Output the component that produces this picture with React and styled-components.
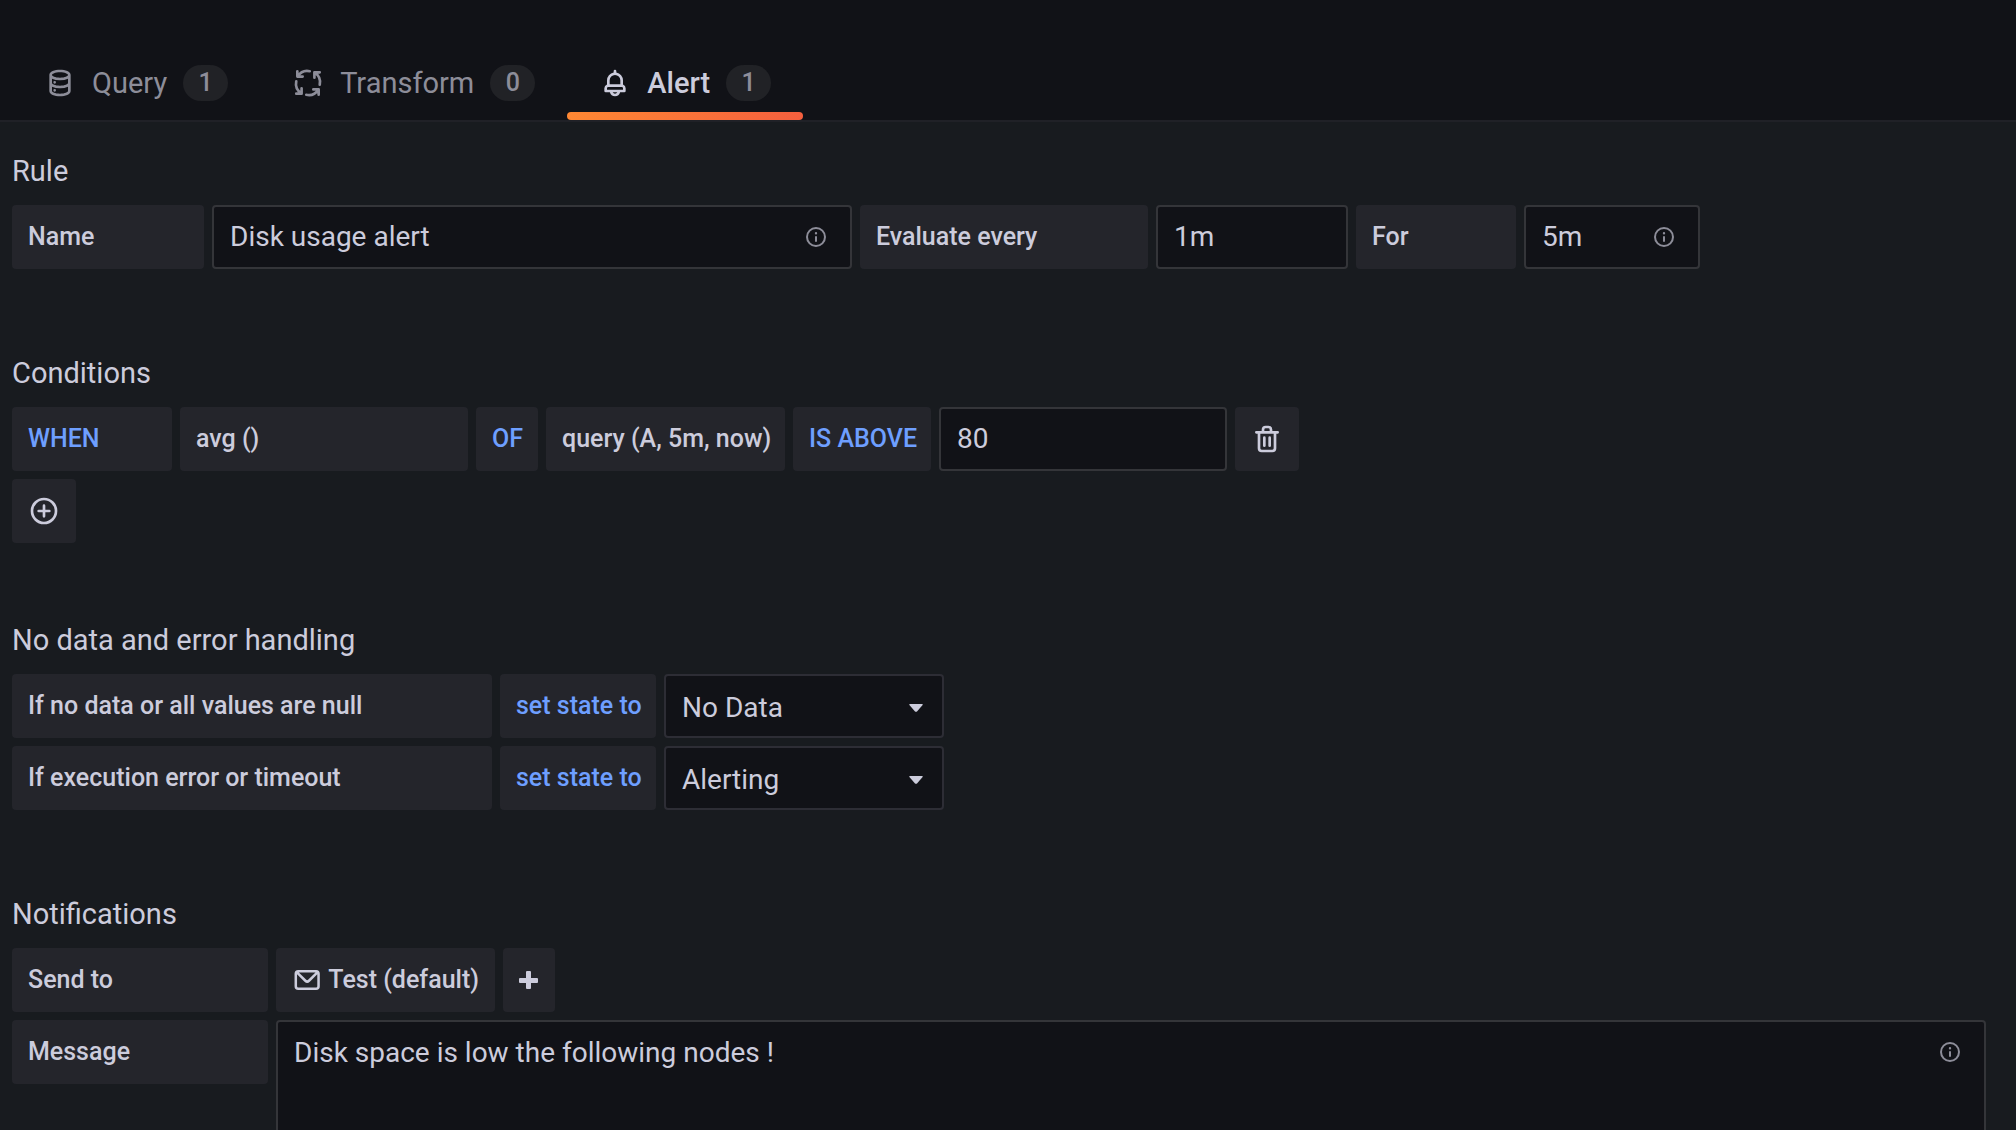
import React from "react";
import styled, { createGlobalStyle, css } from "styled-components";

const color = {
  canvas: "#111217",
  panel: "#181b1f",
  block: "#24252b",
  border: "#343539",
  selectBorder: "#2d2d35",
  divider: "#202127",
  badge: "#212226",
  text: "#ccccdc",
  muted: "#8d8d99",
  link: "#6e9fff",
};

const GlobalStyle = createGlobalStyle`
  *, *::before, *::after { box-sizing: border-box; }
  body {
    margin: 0;
    background: ${color.panel};
    color: ${color.text};
    font-family: Roboto, "Liberation Sans", sans-serif;
    font-size: 28px;
    line-height: 42px;
  }
  button, input, select, textarea { font: inherit; color: inherit; margin: 0; }
`;

const Page = styled.div`
  display: flex;
  flex-direction: column;
  height: 100vh;
`;

const TabBar = styled.header`
  flex: none;
  padding: 46px 12px 0;
  background: ${color.canvas};
  border-bottom: 2px solid ${color.divider};
`;

const TabList = styled.div`
  display: flex;
`;

const Tab = styled.button`
  position: relative;
  display: flex;
  align-items: center;
  gap: 16px;
  height: 74px;
  padding: 0 32px;
  border: 0;
  background: none;
  color: ${(p) => (p.$active ? color.text : color.muted)};
  font-size: 29px;
  font-weight: ${(p) => (p.$active ? 500 : 400)};
  cursor: pointer;

  ${(p) =>
    p.$active &&
    css`
      &::after {
        content: "";
        position: absolute;
        left: 0;
        right: 0;
        bottom: 0;
        height: 8px;
        border-radius: 4px;
        background: linear-gradient(90deg, #ff8833, #f55f3e);
      }
    `}
`;

const Counter = styled.span`
  min-width: 45px;
  border-radius: 18px;
  background: ${color.badge};
  color: ${color.muted};
  font-size: 25px;
  font-weight: 500;
  line-height: 36px;
  text-align: center;
`;

const Content = styled.main`
  flex: 1;
  min-height: 0;
  overflow-y: auto;
  scrollbar-width: none;
  padding: 28px 30px 32px 12px;
`;

const Section = styled.section`
  margin-bottom: ${(p) => (p.$tight ? 76 : 83)}px;
`;

const Heading = styled.h2`
  margin: 0 0 13px;
  font-size: 29px;
  font-weight: 400;
  line-height: 42px;
`;

const Rows = styled.div`
  display: flex;
  flex-direction: column;
  gap: 8px;
`;

const Row = styled.div`
  display: flex;
  align-items: flex-start;
  gap: 8px;
`;

const block = css`
  display: flex;
  align-items: center;
  flex: none;
  height: 64px;
  width: ${(p) => (p.$width ? `${p.$width}px` : "auto")};
  padding: 0 16px;
  border: 0;
  border-radius: 4px;
  background: ${color.block};
  color: ${(p) => (p.$keyword ? color.link : color.text)};
  font-size: 25px;
  font-weight: 500;
  line-height: 36px;
  white-space: nowrap;
`;

const Label = styled.label`
  ${block}
`;

const Tag = styled.span`
  ${block}
`;

const Segment = styled.button`
  ${block}
  gap: 6px;
  text-align: left;
  cursor: pointer;
`;

const IconButton = styled.button`
  ${block}
  justify-content: center;
  padding: 0;
  cursor: pointer;
`;

const Field = styled.div`
  position: relative;
  flex: ${(p) => (p.$width ? "none" : "1")};
  width: ${(p) => (p.$width ? `${p.$width}px` : "auto")};
`;

const control = css`
  display: block;
  width: 100%;
  border: 2px solid ${color.border};
  border-radius: 4px;
  background: ${color.canvas};
  outline: none;
`;

const Input = styled.input`
  ${control}
  height: 64px;
  padding: 0 16px 2px;
`;

const Select = styled.select`
  ${control}
  height: 64px;
  padding: 4px 48px 0 16px;
  border-color: ${color.selectBorder};
  appearance: none;
  cursor: pointer;
`;

const TextArea = styled.textarea`
  ${control}
  padding: 10px 64px 10px 16px;
  resize: none;
`;

const Hint = styled.span`
  position: absolute;
  top: 20px;
  right: 24px;
  display: flex;
  color: ${color.muted};
`;

const Caret = styled.svg`
  position: absolute;
  top: 30px;
  right: 21px;
  pointer-events: none;
`;

const icons = {
  database:
    "M8,16.5a1,1,0,1,0,1,1A1,1,0,0,0,8,16.5ZM12,2C8,2,4,3.37,4,6V18c0,2.63,4,4,8,4s8-1.37,8-4V6C20,3.37,16,2,12,2Zm6,16c0,.71-2.28,2-6,2s-6-1.29-6-2V14.73A13.16,13.16,0,0,0,12,16a13.16,13.16,0,0,0,6-1.27Zm0-6c0,.71-2.28,2-6,2s-6-1.29-6-2V8.73A13.16,13.16,0,0,0,12,10a13.16,13.16,0,0,0,6-1.27ZM12,8C8.28,8,6,6.71,6,6s2.28-2,6-2,6,1.29,6,2S15.72,8,12,8ZM8,10.5a1,1,0,1,0,1,1A1,1,0,0,0,8,10.5Z",
  bell: "M18,13.18V10a6,6,0,0,0-5-5.91V3a1,1,0,0,0-2,0V4.09A6,6,0,0,0,6,10v3.18A3,3,0,0,0,4,16v2a1,1,0,0,0,1,1H8.14a4,4,0,0,0,7.72,0H19a1,1,0,0,0,1-1V16A3,3,0,0,0,18,13.18ZM8,10a4,4,0,0,1,8,0v3H8Zm4,10a2,2,0,0,1-1.72-1h3.44A2,2,0,0,1,12,20Zm6-3H6V16a1,1,0,0,1,1-1H17a1,1,0,0,1,1,1Z",
  info: "M12,2A10,10,0,1,0,22,12,10,10,0,0,0,12,2Zm0,18a8,8,0,1,1,8-8A8,8,0,0,1,12,20Zm0-9a1,1,0,0,0-1,1v4a1,1,0,0,0,2,0V12A1,1,0,0,0,12,11Zm0-4a1.2,1.2,0,1,0,1.2,1.2A1.2,1.2,0,0,0,12,7Z",
  trash:
    "M10,18a1,1,0,0,0,1-1V11a1,1,0,0,0-2,0v6A1,1,0,0,0,10,18ZM20,6H16V5a3,3,0,0,0-3-3H11A3,3,0,0,0,8,5V6H4A1,1,0,0,0,4,8H5V19a3,3,0,0,0,3,3h8a3,3,0,0,0,3-3V8h1a1,1,0,0,0,0-2ZM10,5a1,1,0,0,1,1-1h2a1,1,0,0,1,1,1V6H10Zm7,14a1,1,0,0,1-1,1H8a1,1,0,0,1-1-1V8H17Zm-3-1a1,1,0,0,0,1-1V11a1,1,0,0,0-2,0v6A1,1,0,0,0,14,18Z",
  plusCircle:
    "M12,2A10,10,0,1,0,22,12,10,10,0,0,0,12,2Zm0,18a8,8,0,1,1,8-8A8,8,0,0,1,12,20Zm4-9H13V8a1,1,0,0,0-2,0v3H8a1,1,0,0,0,0,2h3v3a1,1,0,0,0,2,0V13h3a1,1,0,0,0,0-2Z",
  envelope:
    "M19,4H5A3,3,0,0,0,2,7V17a3,3,0,0,0,3,3H19a3,3,0,0,0,3-3V7A3,3,0,0,0,19,4Zm-.41,2-5.88,5.88a1,1,0,0,1-1.42,0L5.41,6ZM20,17a1,1,0,0,1-1,1H5a1,1,0,0,1-1-1V7.41l5.88,5.88a3,3,0,0,0,4.24,0L20,7.41Z",
};

function Icon({ name, size }) {
  return (
    <svg width={size} height={size} viewBox="0 0 24 24" fill="currentColor" aria-hidden="true">
      <path d={icons[name]} />
    </svg>
  );
}

function TransformIcon() {
  return (
    <svg width="32" height="32" viewBox="0 0 24 24" fill="none" stroke="currentColor" strokeWidth="2" strokeLinecap="round" strokeLinejoin="round" aria-hidden="true">
      <path d="M4 3.200V7.200H8M4.300 7A8.600 8.600 0 0 1 13.300 3.200" />
      <path d="M20.800 4H16.800V8M17 4.300A8.600 8.600 0 0 1 20.800 13.300" />
      <path d="M20 20.800V16.800H16M19.700 17A8.600 8.600 0 0 1 10.700 20.800" />
      <path d="M3.200 20H7.200V16M7 19.700A8.600 8.600 0 0 1 3.200 10.700" />
    </svg>
  );
}

function PlusIcon() {
  return (
    <svg width="20" height="20" viewBox="0 0 20 20" fill="currentColor" aria-hidden="true">
      <rect x="7" y="1" width="5" height="18" rx="1" />
      <rect x="0" y="8" width="19" height="5" rx="1" />
    </svg>
  );
}

function InfoHint() {
  return (
    <Hint>
      <Icon name="info" size={24} />
    </Hint>
  );
}

function StateRow({ id, label, value, options }) {
  return (
    <Row>
      <Label htmlFor={id} $width={480}>{label}</Label>
      <Tag $keyword $width={156}>set state to</Tag>
      <Field $width={280}>
        <Select id={id} defaultValue={value}>
          {options.map((option) => (
            <option key={option}>{option}</option>
          ))}
        </Select>
        <Caret width="14" height="8" viewBox="0 0 14 8" fill="currentColor" aria-hidden="true">
          <path d="M1 0h12q1.400 0 .6 1L8 7.400q-1 .9-2 0L.4 1Q-.4 0 1 0Z" />
        </Caret>
      </Field>
    </Row>
  );
}

export default function App() {
  return (
    <Page>
      <GlobalStyle />
      <TabBar>
        <TabList role="tablist">
          <Tab role="tab" aria-selected="false">
            <Icon name="database" size={32} />
            <span>Query</span>
            <Counter>1</Counter>
          </Tab>
          <Tab role="tab" aria-selected="false">
            <TransformIcon />
            <span>Transform</span>
            <Counter>0</Counter>
          </Tab>
          <Tab role="tab" aria-selected="true" $active>
            <Icon name="bell" size={32} />
            <span>Alert</span>
            <Counter>1</Counter>
          </Tab>
        </TabList>
      </TabBar>

      <Content>
        <Section>
          <Heading>Rule</Heading>
          <Row>
            <Label htmlFor="name" $width={192}>Name</Label>
            <Field $width={640}>
              <Input id="name" defaultValue="Disk usage alert" />
              <InfoHint />
            </Field>
            <Label htmlFor="every" $width={288}>Evaluate every</Label>
            <Field $width={192}>
              <Input id="every" defaultValue="1m" />
            </Field>
            <Label htmlFor="for" $width={160}>For</Label>
            <Field $width={176}>
              <Input id="for" defaultValue="5m" />
              <InfoHint />
            </Field>
          </Row>
        </Section>

        <Section $tight>
          <Heading>Conditions</Heading>
          <Rows>
            <Row>
              <Tag $keyword $width={160}>WHEN</Tag>
              <Segment $width={288}>avg ()</Segment>
              <Tag $keyword $width={62}>OF</Tag>
              <Segment $width={239}>query (A, 5m, now)</Segment>
              <Segment $keyword $width={138}>IS ABOVE</Segment>
              <Field $width={288}>
                <Input aria-label="Threshold" defaultValue="80" />
              </Field>
              <IconButton $width={64} aria-label="Delete condition">
                <Icon name="trash" size={32} />
              </IconButton>
            </Row>
            <Row>
              <IconButton $width={64} aria-label="Add condition">
                <Icon name="plusCircle" size={32} />
              </IconButton>
            </Row>
          </Rows>
        </Section>

        <Section>
          <Heading>No data and error handling</Heading>
          <Rows>
            <StateRow
              id="no-data"
              label="If no data or all values are null"
              value="No Data"
              options={["Alerting", "No Data", "Keep Last State", "Ok"]}
            />
            <StateRow
              id="exec-error"
              label="If execution error or timeout"
              value="Alerting"
              options={["Alerting", "Keep Last State"]}
            />
          </Rows>
        </Section>

        <Section>
          <Heading>Notifications</Heading>
          <Rows>
            <Row>
              <Tag $width={256}>Send to</Tag>
              <Segment $width={219}>
                <Icon name="envelope" size={32} />
                Test (default)
              </Segment>
              <IconButton $width={52} aria-label="Add notification channel">
                <PlusIcon />
              </IconButton>
            </Row>
            <Row>
              <Label htmlFor="message" $width={256}>Message</Label>
              <Field>
                <TextArea id="message" rows={10} defaultValue="Disk space is low the following nodes !" />
                <InfoHint />
              </Field>
            </Row>
          </Rows>
        </Section>
      </Content>
    </Page>
  );
}
